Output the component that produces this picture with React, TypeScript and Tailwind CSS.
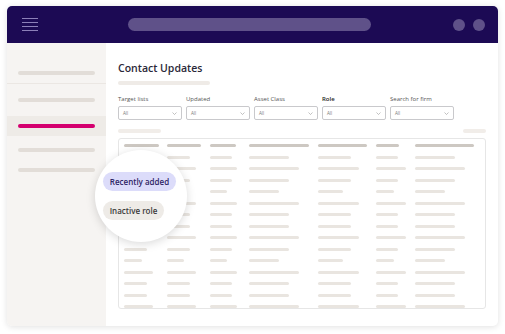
import React from 'react';

const filters = ['Target lists', 'Updated', 'Asset Class', 'Role', 'Search for firm'];

// bar widths per column, one set per row "type"
const widths: Record<string, number[]> = {
  h: [35, 34, 26, 60, 49, 23, 59],
  a: [23, 23, 22, 40, 33, 22, 40],
  b: [29, 29, 27, 50, 41, 30, 50],
  c: [18, 17, 17, 30, 25, 18, 30],
};
const rows = ['a', 'b', 'a', 'c', 'b', 'a', 'a', 'b', 'a', 'c', 'b', 'a', 'a', 'b'];

function Bar({ w, dark }: { w: number; dark?: boolean }) {
  return (
    <div
      className={'h-[3px] rounded-full ' + (dark ? 'bg-[#cdc8c2]' : 'bg-[#e9e5e0]')}
      style={{ width: w }}
    />
  );
}

function Select() {
  return (
    <div className="flex items-center justify-between h-[14px] w-[64px] border border-solid border-[#c9c9cc] rounded-[2px] px-[4px] bg-white">
      <span className="text-[4.5px] text-[#777]">All</span>
      <svg width="5" height="3" viewBox="0 0 5 3" fill="none">
        <path d="M0.5 0.5 L2.5 2.5 L4.5 0.5" stroke="#999" strokeWidth="0.6" />
      </svg>
    </div>
  );
}

export default function App() {
  return (
    <div className="w-[505px] h-[334px] bg-white pt-[6px] pl-[7px] font-['Open_Sans',sans-serif] relative overflow-hidden">
      <div className="w-[491px] h-[320px] rounded-[5px] bg-white shadow-[0_1px_6px_rgba(0,0,0,0.12)] flex flex-col overflow-hidden">
        {/* Header */}
        <div className="h-[37px] bg-[#1c0a54] flex items-center pl-[15px] pr-[13px] shrink-0">
          <div className="flex flex-col gap-[3px] w-[16px]">
            <div className="h-[1px] bg-[#8c80b8]" />
            <div className="h-[1px] bg-[#8c80b8]" />
            <div className="h-[1px] bg-[#8c80b8]" />
            <div className="h-[1px] bg-[#8c80b8]" />
          </div>
          <div className="ml-[90px] w-[243px] h-[13px] rounded-full bg-[#5f5189]" />
          <div className="ml-auto flex gap-[8px]">
            <div className="w-[12px] h-[12px] rounded-full bg-[#5f5189]" />
            <div className="w-[12px] h-[12px] rounded-full bg-[#5f5189]" />
          </div>
        </div>

        <div className="flex flex-1">
          {/* Sidebar */}
          <div className="w-[99px] bg-[#f6f4f2] flex flex-col pt-[23px]">
            <div className="h-[18px] flex items-center px-[11px] border-b border-solid border-[#ebe7e3] pb-[3px]">
              <div className="h-[4px] w-full rounded-full bg-[#e2ddd8]" />
            </div>
            <div className="h-[32px] flex items-center px-[11px]">
              <div className="h-[4px] w-full rounded-full bg-[#e2ddd8]" />
            </div>
            <div className="h-[20px] flex items-center px-[11px] bg-[#eeebe7]">
              <div className="h-[4px] w-full rounded-full bg-[#d4006f]" />
            </div>
            <div className="h-[28px] flex items-center px-[11px]">
              <div className="h-[4px] w-full rounded-full bg-[#e2ddd8]" />
            </div>
            <div className="h-[12px] flex items-center px-[11px]">
              <div className="h-[4px] w-full rounded-full bg-[#e2ddd8]" />
            </div>
          </div>

          {/* Main */}
          <div className="flex-1 px-[12px] pt-[18px]">
            <div className="text-[10.5px] font-semibold text-[#2a2838] leading-[14px]">Contact Updates</div>
            <div className="mt-[6px] h-[4px] w-[92px] rounded-full bg-[#efebe7]" />
            <div className="mt-[10px] flex gap-[4px]">
              {filters.map((f) => (
                <div key={f} className="flex flex-col gap-[3px]">
                  <span
                    className={
                      'text-[6px] leading-[8px] ' +
                      (f === 'Role' ? 'text-[#222] font-semibold' : 'text-[#555]')
                    }
                  >
                    {f}
                  </span>
                  <Select />
                </div>
              ))}
            </div>
            <div className="mt-[9px] flex justify-between">
              <div className="h-[4px] w-[43px] rounded-full bg-[#f1ede9]" />
              <div className="h-[4px] w-[23px] rounded-full bg-[#f1ede9]" />
            </div>

            {/* Table */}
            <div className="mt-[5px] h-[171px] border border-solid border-[#e6e6e6] rounded-[3px] pl-[5px] pt-[5px] flex flex-col gap-[8.5px]">
              <div className="grid grid-cols-[43px_43px_39px_69px_58px_39px_1fr]">
                {widths.h.map((w, i) => (
                  <Bar key={i} w={w} dark />
                ))}
              </div>
              {rows.map((r, ri) => (
                <div key={ri} className="grid grid-cols-[43px_43px_39px_69px_58px_39px_1fr]">
                  {widths[r].map((w, i) => (
                    <Bar key={i} w={w} />
                  ))}
                </div>
              ))}
            </div>
          </div>
        </div>
      </div>

      {/* Magnifier overlay */}
      <div className="absolute left-[95px] top-[150px] w-[92px] h-[92px] rounded-full bg-white shadow-[0_2px_10px_rgba(0,0,0,0.15)] flex flex-col justify-center pl-[8px] gap-[10px]">
        <div className="w-[73px] h-[19px] rounded-full bg-[#dcdcfa] flex items-center justify-center text-[8px] font-semibold text-[#2e2565]">
          Recently added
        </div>
        <div className="w-[61px] h-[19px] rounded-full bg-[#eeebe7] flex items-center justify-center text-[8px] font-semibold text-[#3a3a3a]">
          Inactive role
        </div>
      </div>
    </div>
  );
}
